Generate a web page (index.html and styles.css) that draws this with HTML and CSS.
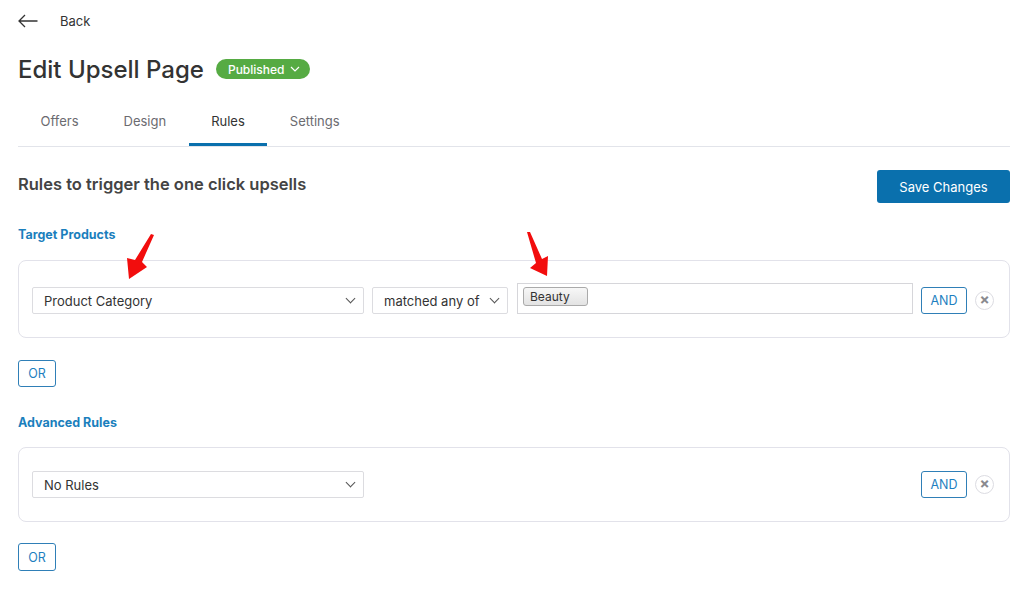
FILE: index.html
```html
<!DOCTYPE html>
<html lang="en">
<head>
<meta charset="UTF-8">
<meta name="viewport" content="width=device-width, initial-scale=1.0">
<title>Edit Upsell Page</title>
<link rel="stylesheet" href="styles.css">
</head>
<body>

<div class="page">
    <div class="back-row">
        <svg class="back-icon" width="20" height="14" viewBox="0 0 20 14">
            <path d="M19.5 7H1M7 1L1 7l6 6" fill="none" stroke="#333" stroke-width="1.3"/>
        </svg>
        <span>Back</span>
    </div>

    <div class="title-row">
        <h1>Edit Upsell Page</h1>
        <span class="badge">Published
            <svg width="10" height="6" viewBox="0 0 10 6"><path d="M1 1l4 4 4-4" fill="none" stroke="#fff" stroke-width="1.2"/></svg>
        </span>
    </div>

    <div class="tabs">
        <div class="tab">Offers</div>
        <div class="tab">Design</div>
        <div class="tab active">Rules</div>
        <div class="tab">Settings</div>
    </div>

    <div class="heading-row">
        <h2>Rules to trigger the one click upsells</h2>
        <button class="save-btn">Save Changes</button>
    </div>

    <div class="section-label">Target Products</div>
    <div class="rule-box">
        <div class="select wide">Product Category <span class="chev"></span></div>
        <div class="select mid">matched any of <span class="chev"></span></div>
        <div class="field"><span class="tag">Beauty</span></div>
        <button class="outline-btn">AND</button>
        <span class="remove">&times;</span>
    </div>
    <button class="outline-btn or">OR</button>

    <div class="section-label adv">Advanced Rules</div>
    <div class="rule-box short">
        <div class="select wide">No Rules <span class="chev"></span></div>
        <div class="spacer"></div>
        <button class="outline-btn">AND</button>
        <span class="remove">&times;</span>
    </div>
    <button class="outline-btn or">OR</button>

    <!-- red annotation arrows -->
    <svg class="annotations" width="1024" height="599" viewBox="0 0 1024 599">
        <polygon points="151,234 154,235 142,262 147,267 129,279 127,258 135,260" fill="#f20d0d"/>
        <polygon points="527,232 530,232 542,259 548,256 547,276 530,268 536,263" fill="#f20d0d"/>
    </svg>
</div>

</body>
</html>
```

FILE: styles.css
```css
body {
    margin: 0;
    background-color: #ffffff;
    font-family: Inter, "Noto Sans", sans-serif;
    color: #333333;
}
.page {
    position: relative;
    padding: 12px 14px 0 18px;
    height: 587px;
}
.back-row {
    display: flex;
    align-items: center;
    height: 18px;
    font-size: 13px;
    color: #333;
}
.back-icon {
    margin-right: 22px;
}
.title-row {
    display: flex;
    align-items: center;
    margin-top: 23px;
    height: 32px;
}
.title-row h1 {
    margin: 0;
    font-size: 24px;
    font-weight: 500;
    color: #333;
}
.badge {
    display: inline-flex;
    align-items: center;
    gap: 6px;
    margin-left: 12px;
    background-color: #56ab43;
    color: #fff;
    font-size: 12px;
    font-weight: 500;
    height: 20px;
    padding: 0 10px 0 12px;
    border-radius: 10px;
}
.tabs {
    display: flex;
    margin-top: 15px;
    border-bottom: 1px solid #e2e4ea;
}
.tab {
    padding: 13px 22.5px 14px;
    font-size: 13px;
    line-height: 16px;
    color: #6b6b70;
    border-bottom: 3px solid transparent;
}
.tab.active {
    color: #333;
    border-bottom-color: #0a70ad;
}
.heading-row {
    display: flex;
    justify-content: space-between;
    align-items: flex-start;
    margin-top: 23px;
}
.heading-row h2 {
    margin: 4px 0 0;
    font-size: 16.5px;
    line-height: 20px;
    font-weight: 600;
    color: #444;
}
.save-btn {
    background-color: #0a70ad;
    color: #fff;
    border: none;
    border-radius: 3px;
    width: 133px;
    height: 33px;
    font-family: inherit;
    font-size: 13px;
}
.section-label {
    margin-top: 24px;
    font-size: 12.5px;
    line-height: 16px;
    font-weight: 700;
    color: #1b7fbd;
}
.section-label.adv {
    margin-top: 28px;
}
.rule-box {
    display: flex;
    align-items: flex-end;
    margin-top: 17px;
    border: 1px solid #e2e2ea;
    border-radius: 8px;
    padding: 22px 15px 23px 13px;
}
.rule-box.short {
    margin-top: 16px;
    align-items: center;
    padding: 23px 15px 23px 13px;
}
.select {
    position: relative;
    box-sizing: border-box;
    height: 27px;
    border: 1px solid #dcdce0;
    border-radius: 2px;
    font-size: 13px;
    line-height: 26px;
    padding-left: 11px;
    color: #333;
}
.select.wide {
    width: 332px;
}
.select.mid {
    width: 136px;
    margin-left: 8px;
}
.chev {
    position: absolute;
    right: 9px;
    top: 7px;
    width: 6px;
    height: 6px;
    border-right: 1.2px solid #555;
    border-bottom: 1.2px solid #555;
    transform: rotate(45deg);
}
.field {
    box-sizing: border-box;
    width: 396px;
    height: 31px;
    margin-left: 9px;
    border: 1px solid #d6d6da;
    padding: 3px 5px;
    display: flex;
    align-items: flex-start;
}
.tag {
    display: block;
    box-sizing: border-box;
    width: 65px;
    height: 19px;
    line-height: 17px;
    padding-left: 6px;
    font-size: 12px;
    color: #333;
    border: 1px solid #aaa;
    border-radius: 3px;
    background: linear-gradient(#f7f7f7, #e3e3e3);
}
.spacer {
    flex: 1;
}
.outline-btn {
    box-sizing: border-box;
    width: 46px;
    height: 27px;
    margin-left: 8px;
    border: 1px solid #2f7fb7;
    border-radius: 3px;
    background-color: #fff;
    color: #1e7fc0;
    font-family: inherit;
    font-size: 12.5px;
    padding: 0;
}
.outline-btn.or {
    display: block;
    width: 38px;
    margin: 22px 0 0;
}
.rule-box.short + .outline-btn.or {
    margin-top: 21px;
    height: 28px;
}
.remove {
    box-sizing: border-box;
    width: 19px;
    height: 19px;
    margin-left: 8px;
    margin-bottom: 4px;
    border: 1px solid #dcdce2;
    border-radius: 50%;
    text-align: center;
    line-height: 16px;
    font-size: 15px;
    font-weight: 700;
    color: #8a8a8f;
}
.rule-box.short .remove {
    margin-bottom: 0;
}
.annotations {
    position: absolute;
    top: 0;
    left: 0;
    pointer-events: none;
}
```
